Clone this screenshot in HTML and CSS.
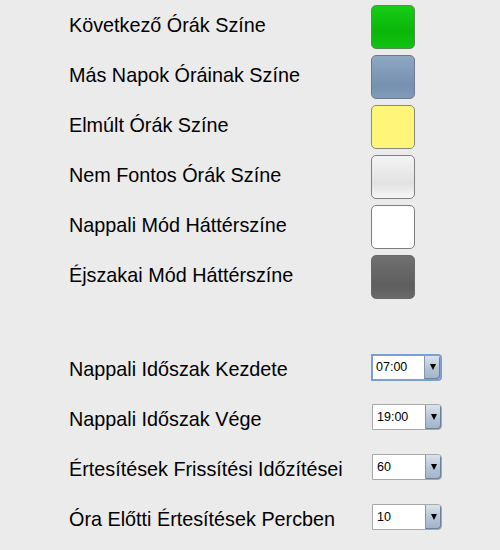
FILE: index.html
```html
<!DOCTYPE html>
<html lang="hu">
<head>
<meta charset="utf-8">
<link rel="stylesheet" href="styles.css">
</head>
<body>
<div class="settings">
  <div class="group colors">
    <div class="row"><span class="label">Következő Órák Színe</span><span class="swatch green"></span></div>
    <div class="row"><span class="label">Más Napok Óráinak Színe</span><span class="swatch blue"></span></div>
    <div class="row"><span class="label">Elmúlt Órák Színe</span><span class="swatch yellow"></span></div>
    <div class="row"><span class="label">Nem Fontos Órák Színe</span><span class="swatch light"></span></div>
    <div class="row"><span class="label">Nappali Mód Háttérszíne</span><span class="swatch white"></span></div>
    <div class="row"><span class="label">Éjszakai Mód Háttérszíne</span><span class="swatch dark"></span></div>
  </div>
  <div class="group selects">
    <div class="row"><span class="label">Nappali Időszak Kezdete</span><div class="select focused"><span class="value">07:00</span><span class="btn"><span class="arrow"></span></span></div></div>
    <div class="row"><span class="label">Nappali Időszak Vége</span><div class="select"><span class="value">19:00</span><span class="btn"><span class="arrow"></span></span></div></div>
    <div class="row"><span class="label">Értesítések Frissítési Időzítései</span><div class="select"><span class="value">60</span><span class="btn"><span class="arrow"></span></span></div></div>
    <div class="row"><span class="label">Óra Előtti Értesítések Percben</span><div class="select"><span class="value">10</span><span class="btn"><span class="arrow"></span></span></div></div>
  </div>
</div>
</body>
</html>
```
FILE: styles.css
```css
html, body {
  margin: 0;
  padding: 0;
  background: #ebebeb;
}
body {
  font-family: "Liberation Sans", Arial, sans-serif;
  color: #000;
  width: 500px;
  height: 550px;
  overflow: hidden;
}
.settings {
  padding: 2px 0 0 69px;
}
.group {
  display: flex;
  flex-direction: column;
}
.selects {
  margin-top: 40px;
}
.row {
  display: grid;
  grid-template-columns: 302px auto;
  align-items: center;
  height: 50px;
}
.label {
  font-size: 19.8px;
  line-height: 20px;
  white-space: nowrap;
}
.colors .label {
  margin-bottom: 5px;
}
.selects .label {
  margin-top: 4px;
}
.swatch {
  width: 42px;
  height: 42px;
  border: 1px solid #7a7a7a;
  border-radius: 5px;
  box-sizing: content-box;
}
.green { background: linear-gradient(#18cd18, #0ab60a 60%, #12c212); border-color: #5a8a5a; }
.blue { background: linear-gradient(#8ea7c3, #7690b0 70%, #819bbb); border-color: #6b7b8d; }
.yellow { background: #fff579; border-color: #8a8a7a; }
.light { background: linear-gradient(#f4f4f4, #e2e2e2 65%, #f6f6f6); border-color: #808080; }
.white { background: #fff; border-color: #7e7e7e; }
.dark { background: linear-gradient(#707070, #5e5e5e 70%, #6a6a6a); border-color: #6a6a6a; }

.select {
  width: 70px;
  height: 26px;
  box-sizing: border-box;
  border: 1px solid #a9a9a9;
  border-radius: 0 4px 4px 0;
  background: #fff;
  display: flex;
  align-items: stretch;
  margin-left: 1px;
}
.select.focused {
  border: 2px solid #7a9fd2;
  height: 27px;
  width: 71px;
  margin-left: 0;
}
.value {
  flex: 1;
  font-size: 12.5px;
  line-height: 24px;
  padding-left: 4px;
}
.focused .value { line-height: 23px; padding-left: 3px; }
.btn {
  width: 15px;
  background: linear-gradient(#dbe4ee, #b4c4d6 55%, #9fb3c9);
  border-left: 1px solid #8596ab;
  border-radius: 0 3px 3px 0;
  display: flex;
  align-items: center;
  justify-content: center;
  box-shadow: inset -1px -1px 0 #6f8197;
}
.arrow {
  width: 0;
  height: 0;
  border-left: 3px solid transparent;
  border-right: 3px solid transparent;
  border-top: 6px solid #000;
}
```
